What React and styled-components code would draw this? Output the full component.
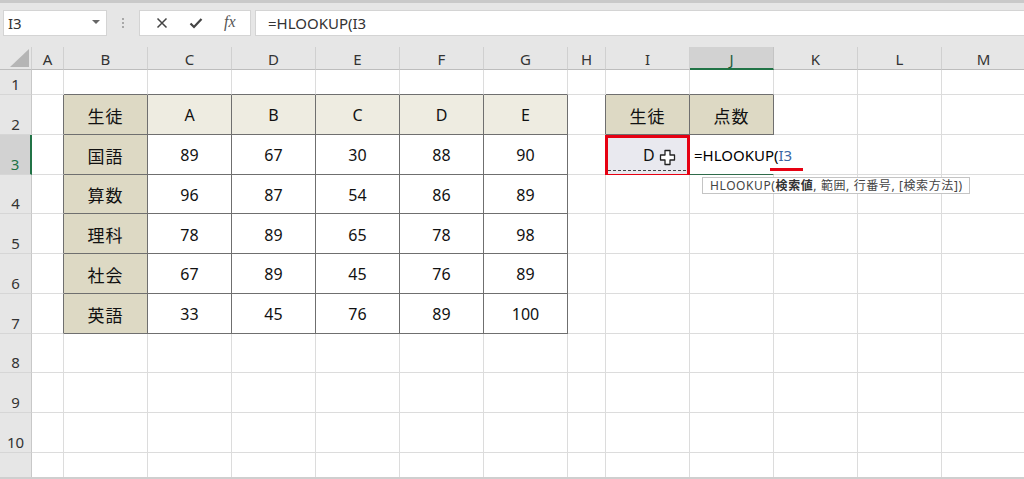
import React from 'react';
import styled, { createGlobalStyle, css } from 'styled-components';

const GlobalStyle = createGlobalStyle`
  html, body { margin: 0; padding: 0; background: #ffffff; }
  body { font-family: "Noto Sans", "Noto Sans CJK JP", sans-serif; }
  * { box-sizing: border-box; }
`;

const Page = styled.div`
  width: 1024px;
  height: 479px;
  overflow: hidden;
  background: #e6e6e6;
  display: flex;
  flex-direction: column;
  border-top: 3px solid #c9c9c9;
  border-bottom: 2px solid #cfcfcf;
`;

const Toolbar = styled.div`
  height: 44px;
  flex: none;
  display: flex;
  align-items: flex-start;
  padding: 7px 0 0 3px;
`;

const NameBox = styled.div`
  width: 104px;
  height: 26px;
  background: #fff;
  border: 1px solid #d4d4d4;
  display: flex;
  align-items: center;
  justify-content: space-between;
  padding: 0 6px 0 4px;
  font-size: 15px;
  color: #333;
`;

const Arrow = styled.span`
  width: 0;
  height: 0;
  border-left: 4px solid transparent;
  border-right: 4px solid transparent;
  border-top: 4px solid #666;
  margin-top: -2px;
`;

const Grip = styled.div`
  width: 32px;
  height: 26px;
  display: flex;
  flex-direction: column;
  align-items: center;
  justify-content: center;
  gap: 2px;
  & > i {
    display: block;
    width: 2px;
    height: 2px;
    background: #a8a8a8;
  }
`;

const FxButtons = styled.div`
  width: 112px;
  height: 26px;
  background: #fff;
  border: 1px solid #d4d4d4;
  display: flex;
  align-items: center;
  justify-content: space-around;
  padding: 0 4px 0 6px;
  color: #444;
`;

const FxLabel = styled.span`
  font-family: "Liberation Serif", "DejaVu Serif", serif;
  font-style: italic;
  font-size: 16px;
  color: #555;
  margin-top: -2px;
`;

const FormulaInput = styled.div`
  flex: 1;
  margin-left: 4px;
  height: 26px;
  background: #fff;
  border-top: 1px solid #d4d4d4;
  border-bottom: 1px solid #d4d4d4;
  border-left: 1px solid #d4d4d4;
  display: flex;
  align-items: center;
  padding-left: 12px;
  font-size: 15px;
  color: #333;
`;

const Sheet = styled.div`
  display: grid;
  grid-template-columns: 32px 32px repeat(6, 84px) 38px repeat(5, 84px);
  grid-template-rows: 23px 25px repeat(10, 39.75px);
  background: #fff;
  flex: none;
`;

const Corner = styled.div`
  background: #e6e6e6;
  border-right: 1px solid #d0d0d0;
  border-bottom: 1px solid #bdbdbd;
  position: relative;
  &::after {
    content: '';
    position: absolute;
    right: 2px;
    bottom: 2px;
    width: 19px;
    height: 18px;
    background: #b5b5b5;
    clip-path: polygon(100% 0, 100% 100%, 0 100%);
  }
`;

const ColHead = styled.div`
  background: ${p => (p.$active ? '#d2d2d2' : '#e6e6e6')};
  border-right: 1px solid ${p => (p.$active ? '#c4c4c4' : '#d0d0d0')};
  border-bottom: ${p => (p.$active ? '2px solid #217346' : '1px solid #bdbdbd')};
  display: flex;
  align-items: center;
  justify-content: center;
  font-size: 15px;
  color: ${p => (p.$active ? '#1e5c3a' : '#333')};
  padding-top: 2px;
`;

const RowHead = styled.div`
  background: ${p => (p.$active ? '#d2d2d2' : '#e6e6e6')};
  border-right: ${p => (p.$active ? '2px solid #217346' : '1px solid #c8c8c8')};
  border-bottom: 1px solid #d6d6d6;
  display: flex;
  align-items: flex-end;
  justify-content: center;
  padding-bottom: 0;
  font-size: 15px;
  color: ${p => (p.$active ? '#217346' : '#333')};
`;

const Cell = styled.div`
  position: relative;
  background: ${p => p.$bg || '#fff'};
  border-right: 1px solid ${p => p.$br};
  border-bottom: 1px solid ${p => p.$bb};
  display: flex;
  align-items: center;
  justify-content: center;
  padding-top: 2px;
  font-size: ${p => (p.$cjk ? '17px' : '16px')};
  color: #111;
  white-space: nowrap;
  ${p =>
    p.$cjk &&
    css`
      letter-spacing: 1px;
    `}
`;

const SelectedCell = styled(Cell)`
  background: #e9e9ef;
  justify-content: flex-start;
  padding-left: 37px;
  &::before {
    content: '';
    position: absolute;
    left: 2px;
    right: 3px;
    bottom: 3px;
    border-bottom: 1px dashed #444;
  }
`;

const RedBox = styled.div`
  position: absolute;
  left: -1px;
  top: 0;
  right: -1px;
  bottom: -3px;
  border: 3px solid #e60012;
  pointer-events: none;
`;

const CursorIcon = styled.svg`
  position: absolute;
  left: 53px;
  top: 14px;
`;

const EditCell = styled(Cell)`
  overflow: visible;
  justify-content: flex-start;
  padding-left: 4px;
  font-size: 15px;
  color: #000;
  border-bottom: 1px solid #2f6b4a;
  z-index: 2;
`;

const RefText = styled.span`
  color: #3b66a3;
`;

const RedUnderline = styled.div`
  position: absolute;
  left: 80px;
  top: 33px;
  width: 33px;
  height: 3px;
  background: #e60012;
`;

const Tooltip = styled.div`
  position: absolute;
  left: 12px;
  top: 42px;
  height: 17px;
  padding: 0 6px 0 7px;
  background: #fff;
  border: 1px solid #c4c4c4;
  font-size: 12px;
  letter-spacing: 0.6px;
  color: #444;
  display: flex;
  align-items: center;
  white-space: nowrap;
  & b { font-weight: 700; color: #333; }
`;

const COLS = ['A', 'B', 'C', 'D', 'E', 'F', 'G', 'H', 'I', 'J', 'K', 'L', 'M'];
const TAN_DARK = '#ddd9c4';
const TAN_LIGHT = '#eeece1';

const data = {
  2: { B: '生徒', C: 'A', D: 'B', E: 'C', F: 'D', G: 'E', I: '生徒', J: '点数' },
  3: { B: '国語', C: '89', D: '67', E: '30', F: '88', G: '90' },
  4: { B: '算数', C: '96', D: '87', E: '54', F: '86', G: '89' },
  5: { B: '理科', C: '78', D: '89', E: '65', F: '78', G: '98' },
  6: { B: '社会', C: '67', D: '89', E: '45', F: '76', G: '89' },
  7: { B: '英語', C: '33', D: '45', E: '76', F: '89', G: '100' },
};

const inBox = (c, r) => {
  if (c >= 1 && c <= 6 && r >= 2 && r <= 7) return true;
  if ((c === 8 || c === 9) && r === 2) return true;
  return false;
};

const bgFor = (c, r) => {
  if (c >= 1 && c <= 6 && r >= 2 && r <= 7) {
    if (c === 1) return TAN_DARK;
    if (r === 2) return TAN_LIGHT;
    return '#fff';
  }
  if ((c === 8 || c === 9) && r === 2) return TAN_DARK;
  return '#fff';
};

const GRID = '#dcdcdc';
const LINE = '#6f6f6f';

const XIcon = () => (
  <svg width="12" height="12" viewBox="0 0 12 12">
    <path d="M1.5 1.5 L10.5 10.5 M10.5 1.5 L1.5 10.5" stroke="#444" strokeWidth="1.5" fill="none" />
  </svg>
);

const CheckIcon = () => (
  <svg width="14" height="12" viewBox="0 0 14 12">
    <path d="M1.5 6.5 L5 10 L12.5 2" stroke="#444" strokeWidth="2.2" fill="none" />
  </svg>
);

export default function App() {
  const rows = [1, 2, 3, 4, 5, 6, 7, 8, 9, 10, 11];
  return (
    <>
      <GlobalStyle />
      <Page>
        <Toolbar>
          <NameBox>
            <span>I3</span>
            <Arrow />
          </NameBox>
          <Grip>
            <i />
            <i />
            <i />
          </Grip>
          <FxButtons>
            <XIcon />
            <CheckIcon />
            <FxLabel>fx</FxLabel>
          </FxButtons>
          <FormulaInput>=HLOOKUP(I3</FormulaInput>
        </Toolbar>
        <Sheet>
          <Corner />
          {COLS.map(k => (
            <ColHead key={k} $active={k === 'J'}>
              {k}
            </ColHead>
          ))}
          {rows.map(r => (
            <React.Fragment key={r}>
              <RowHead $active={r === 3}>{r}</RowHead>
              {COLS.map((k, c) => {
                const br = inBox(c, r) || inBox(c + 1, r) ? LINE : GRID;
                const bb = inBox(c, r) || inBox(c, r + 1) ? LINE : GRID;
                const v = data[r] && data[r][k];
                if (r === 3 && k === 'I') {
                  return (
                    <SelectedCell key={k} $br={GRID} $bb={GRID}>
                      D
                      <CursorIcon width="17" height="17" viewBox="0 0 17 17">
                        <path
                          d="M6 1.5 H11 V6 H15.5 V11 H11 V15.5 H6 V11 H1.5 V6 H6 Z"
                          fill="#fff"
                          stroke="#222"
                          strokeWidth="1.3"
                          strokeLinejoin="round"
                        />
                      </CursorIcon>
                      <RedBox />
                    </SelectedCell>
                  );
                }
                if (r === 3 && k === 'J') {
                  return (
                    <EditCell key={k} $br="transparent" $bb={GRID}>
                      =HLOOKUP(<RefText>I3</RefText>
                      <RedUnderline />
                      <Tooltip>
                        HLOOKUP(<b>検索値</b>, 範囲, 行番号, [検索方法])
                      </Tooltip>
                    </EditCell>
                  );
                }
                const cjk = v && /[^\x00-\x7f]/.test(v);
                return (
                  <Cell key={k} $bg={bgFor(c, r)} $br={br} $bb={bb} $cjk={cjk}>
                    {v}
                  </Cell>
                );
              })}
            </React.Fragment>
          ))}
        </Sheet>
      </Page>
    </>
  );
}
